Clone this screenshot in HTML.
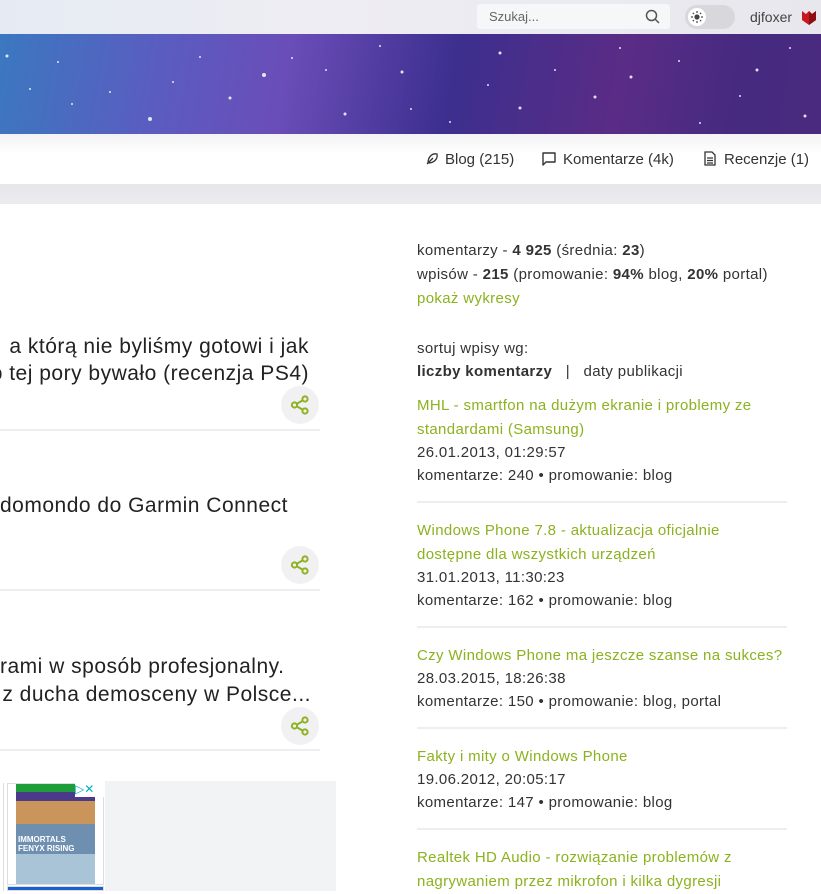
<!DOCTYPE html>
<html><head><meta charset="utf-8"><style>
*{margin:0;padding:0;box-sizing:border-box}
body{width:821px;height:891px;overflow:hidden;font-family:"Liberation Sans",sans-serif;background:#fff;position:relative;color:#333}
.top{position:absolute;left:0;top:0;width:821px;height:34px;background:linear-gradient(90deg,#e6ebf3,#eeedf3 40%,#e8e7ee)}
.search{position:absolute;left:477px;top:4px;width:193px;height:25px;background:#f6f7f9;border-radius:3px;font-size:13px;color:#666;padding:5px 12px}
.tog{position:absolute;left:685px;top:5px;width:50px;height:24px;border-radius:12px;background:#d8d8dc}
.tog i{position:absolute;left:3px;top:3px;width:18px;height:18px;border-radius:50%;background:#fff}
.user{position:absolute;left:750px;top:9px;font-size:14px;color:#444}
.banner{position:absolute;left:0;top:34px;width:821px;height:100px;background:linear-gradient(100deg,#3b78c0 0%,#5b5cc0 20%,#6a4db8 35%,#3c2f8e 55%,#5a2c86 75%,#452a80 90%,#4a2a7e 100%)}
.nav{position:absolute;left:0;top:134px;width:821px;height:50px;background:linear-gradient(#f3f3f5,#fff 40%)}
.nav span{position:absolute;top:17px;font-size:15px;color:#333}
.band{position:absolute;left:0;top:184px;width:821px;height:20px;background:linear-gradient(#e6e6ea,#ececf0)}
.t{position:absolute;right:512px;font-size:21px;letter-spacing:0.5px;color:#222;white-space:nowrap}
.sep{position:absolute;left:0;width:320px;height:2px;background:#eeeef0}
.share{position:absolute;left:281px;width:38px;height:38px;border-radius:50%;background:#f1f1f3}
.share svg{position:absolute;left:9px;top:9px}
.r{position:absolute;left:417px;font-size:15px;letter-spacing:0.35px;line-height:23.5px;color:#333;white-space:nowrap}
.g{color:#8cb21f}
.rs{position:absolute;left:417px;width:370px;height:2px;background:#eeeef0}
</style></head><body>
<div class="top"></div>
<div class="search">Szukaj...<svg style="position:absolute;right:10px;top:5px" width="15" height="15" viewBox="0 0 15 15"><circle cx="6.5" cy="6.5" r="5" fill="none" stroke="#555" stroke-width="1.5"/><line x1="10" y1="10" x2="14" y2="14" stroke="#555" stroke-width="1.5"/></svg></div>
<div class="tog"><i></i><svg style="position:absolute;left:6px;top:6px" width="12" height="12" viewBox="0 0 12 12"><circle cx="6" cy="6" r="2.6" fill="#444"/><g stroke="#444" stroke-width="1.2"><line x1="6" y1="0" x2="6" y2="2"/><line x1="6" y1="10" x2="6" y2="12"/><line x1="0" y1="6" x2="2" y2="6"/><line x1="10" y1="6" x2="12" y2="6"/><line x1="1.8" y1="1.8" x2="3" y2="3"/><line x1="9" y1="9" x2="10.2" y2="10.2"/><line x1="1.8" y1="10.2" x2="3" y2="9"/><line x1="9" y1="3" x2="10.2" y2="1.8"/></g></svg></div>
<div class="user">djfoxer</div>
<svg style="position:absolute;left:802px;top:9px" width="14" height="16" viewBox="0 0 14 16"><path d="M0 2 L4 5 L7 2 L10 5 L14 2 L14 11 L7 16 L0 11Z" fill="#c8171e"/><path d="M7 2 L10 5 L14 2 L14 11 L7 16Z" fill="#8e0d12"/></svg>
<div class="banner"><svg width="821" height="100" style="position:absolute;left:0;top:0">
<g fill="#fff" opacity=".85">
<circle cx="7" cy="22" r="1.5"/><circle cx="58" cy="28" r="1"/><circle cx="110" cy="58" r="1"/><circle cx="150" cy="85" r="2"/><circle cx="173" cy="48" r="1"/><circle cx="230" cy="64" r="1.5"/><circle cx="264" cy="41" r="2"/><circle cx="292" cy="24" r="1"/><circle cx="326" cy="36" r="1"/><circle cx="345" cy="80" r="1.5"/><circle cx="402" cy="38" r="1.5"/><circle cx="411" cy="75" r="1"/><circle cx="488" cy="51" r="1"/><circle cx="500" cy="19" r="1.5"/><circle cx="520" cy="74" r="1.5"/><circle cx="555" cy="36" r="1"/><circle cx="595" cy="63" r="1.5"/><circle cx="631" cy="43" r="1.5"/><circle cx="679" cy="27" r="1"/><circle cx="700" cy="89" r="1"/><circle cx="757" cy="36" r="1.5"/><circle cx="805" cy="82" r="1.5"/><circle cx="790" cy="14" r="1"/><circle cx="72" cy="70" r="1"/><circle cx="200" cy="23" r="1"/><circle cx="380" cy="12" r="1"/><circle cx="450" cy="88" r="1"/><circle cx="620" cy="14" r="1"/><circle cx="740" cy="62" r="1"/><circle cx="30" cy="55" r="1"/>
</g></svg></div>
<div class="nav">
<svg style="position:absolute;left:425px;top:18px" width="14" height="14" viewBox="0 0 14 14"><path d="M2 12 L8 6 M3 11 C3 5 7 1 12 2 C13 7 9 11 3 11Z" fill="none" stroke="#333" stroke-width="1.3"/></svg>
<span style="left:445px">Blog (215)</span>
<svg style="position:absolute;left:542px;top:18px" width="14" height="14" viewBox="0 0 14 14"><path d="M1 1 H13 V10 H4 L1 13Z" fill="none" stroke="#333" stroke-width="1.4" stroke-linejoin="round"/></svg>
<span style="left:563px">Komentarze (4k)</span>
<svg style="position:absolute;left:704px;top:17px" width="12" height="15" viewBox="0 0 12 15"><path d="M1 1 H8 L11 4 V14 H1Z M3 7 H9 M3 9.5 H9 M3 12 H9" fill="none" stroke="#333" stroke-width="1.3"/></svg>
<span style="left:724px">Recenzje (1)</span>
</div>
<div class="band"></div>

<div class="t" style="top:335px">a którą nie byliśmy gotowi i jak</div>
<div class="t" style="top:362px">o tej pory bywało (recenzja PS4)</div>
<div class="share" style="top:386px"><svg width="20" height="20" viewBox="0 0 20 20"><g fill="none" stroke="#8cb21f" stroke-width="2"><circle cx="15" cy="4" r="2.6"/><circle cx="4.5" cy="10" r="2.6"/><circle cx="15" cy="16" r="2.6"/><path d="M7 8.6 L12.6 5.4 M7 11.4 L12.6 14.6"/></g></svg></div>
<div class="sep" style="top:429px"></div>

<div class="t" style="top:494px;left:0;right:auto">domondo do Garmin Connect</div>
<div class="share" style="top:546px"><svg width="20" height="20" viewBox="0 0 20 20"><g fill="none" stroke="#8cb21f" stroke-width="2"><circle cx="15" cy="4" r="2.6"/><circle cx="4.5" cy="10" r="2.6"/><circle cx="15" cy="16" r="2.6"/><path d="M7 8.6 L12.6 5.4 M7 11.4 L12.6 14.6"/></g></svg></div>
<div class="sep" style="top:589px"></div>

<div class="t" style="top:655px;left:0;right:auto">rami w sposób profesjonalny.</div>
<div class="t" style="top:683px;right:510px">z ducha demosceny w Polsce...</div>
<div class="share" style="top:707px"><svg width="20" height="20" viewBox="0 0 20 20"><g fill="none" stroke="#8cb21f" stroke-width="2"><circle cx="15" cy="4" r="2.6"/><circle cx="4.5" cy="10" r="2.6"/><circle cx="15" cy="16" r="2.6"/><path d="M7 8.6 L12.6 5.4 M7 11.4 L12.6 14.6"/></g></svg></div>
<div class="sep" style="top:749px"></div>

<div style="position:absolute;left:0;top:783px;width:4px;height:108px;border-right:1px solid #ddd"></div>
<div style="position:absolute;left:105px;top:781px;width:231px;height:110px;background:#f2f3f5"></div>
<div style="position:absolute;left:7px;top:783px;width:97px;height:102px;border:1px solid #ddd;background:#fff"></div>
<div style="position:absolute;left:16px;top:784px;width:79px;height:100px;background:linear-gradient(#1e9e3a 0 8%,#4b3a8a 8% 17%,#c9955a 17% 40%,#6f8fb0 40% 70%,#a8c4d6 70%)"></div>
<div style="position:absolute;left:18px;top:835px;font-size:8px;color:#fff;font-weight:bold;line-height:9px">IMMORTALS<br>FENYX RISING</div>
<div style="position:absolute;left:75px;top:783px;width:30px;height:14px;background:#fff;color:#00aecd;font-size:12px;line-height:13px">▷✕</div>
<div style="position:absolute;left:7px;top:886px;width:97px;height:5px;border:1px solid #ddd;background:#1a5fd0"></div>

<div class="r" style="top:239px">komentarzy - <b>4 925</b> (średnia: <b>23</b>)</div>
<div class="r" style="top:263px">wpisów - <b>215</b> (promowanie: <b>94%</b> blog, <b>20%</b> portal)</div>
<div class="r g" style="top:287px">pokaż wykresy</div>
<div class="r" style="top:337px">sortuj wpisy wg:</div>
<div class="r" style="top:360px"><b>liczby komentarzy</b> &nbsp; | &nbsp; daty publikacji</div>

<div class="r g" style="top:394px">MHL - smartfon na dużym ekranie i problemy ze</div>
<div class="r g" style="top:418px">standardami (Samsung)</div>
<div class="r" style="top:441px">26.01.2013, 01:29:57</div>
<div class="r" style="top:464px">komentarze: 240 • promowanie: blog</div>
<div class="rs" style="top:501px"></div>

<div class="r g" style="top:519px">Windows Phone 7.8 - aktualizacja oficjalnie</div>
<div class="r g" style="top:543px">dostępne dla wszystkich urządzeń</div>
<div class="r" style="top:566px">31.01.2013, 11:30:23</div>
<div class="r" style="top:589px">komentarze: 162 • promowanie: blog</div>
<div class="rs" style="top:626px"></div>

<div class="r g" style="top:644px">Czy Windows Phone ma jeszcze szanse na sukces?</div>
<div class="r" style="top:667px">28.03.2015, 18:26:38</div>
<div class="r" style="top:690px">komentarze: 150 • promowanie: blog, portal</div>
<div class="rs" style="top:727px"></div>

<div class="r g" style="top:745px">Fakty i mity o Windows Phone</div>
<div class="r" style="top:768px">19.06.2012, 20:05:17</div>
<div class="r" style="top:791px">komentarze: 147 • promowanie: blog</div>
<div class="rs" style="top:828px"></div>

<div class="r g" style="top:846px">Realtek HD Audio - rozwiązanie problemów z</div>
<div class="r g" style="top:870px">nagrywaniem przez mikrofon i kilka dygresji</div>
</body></html>
